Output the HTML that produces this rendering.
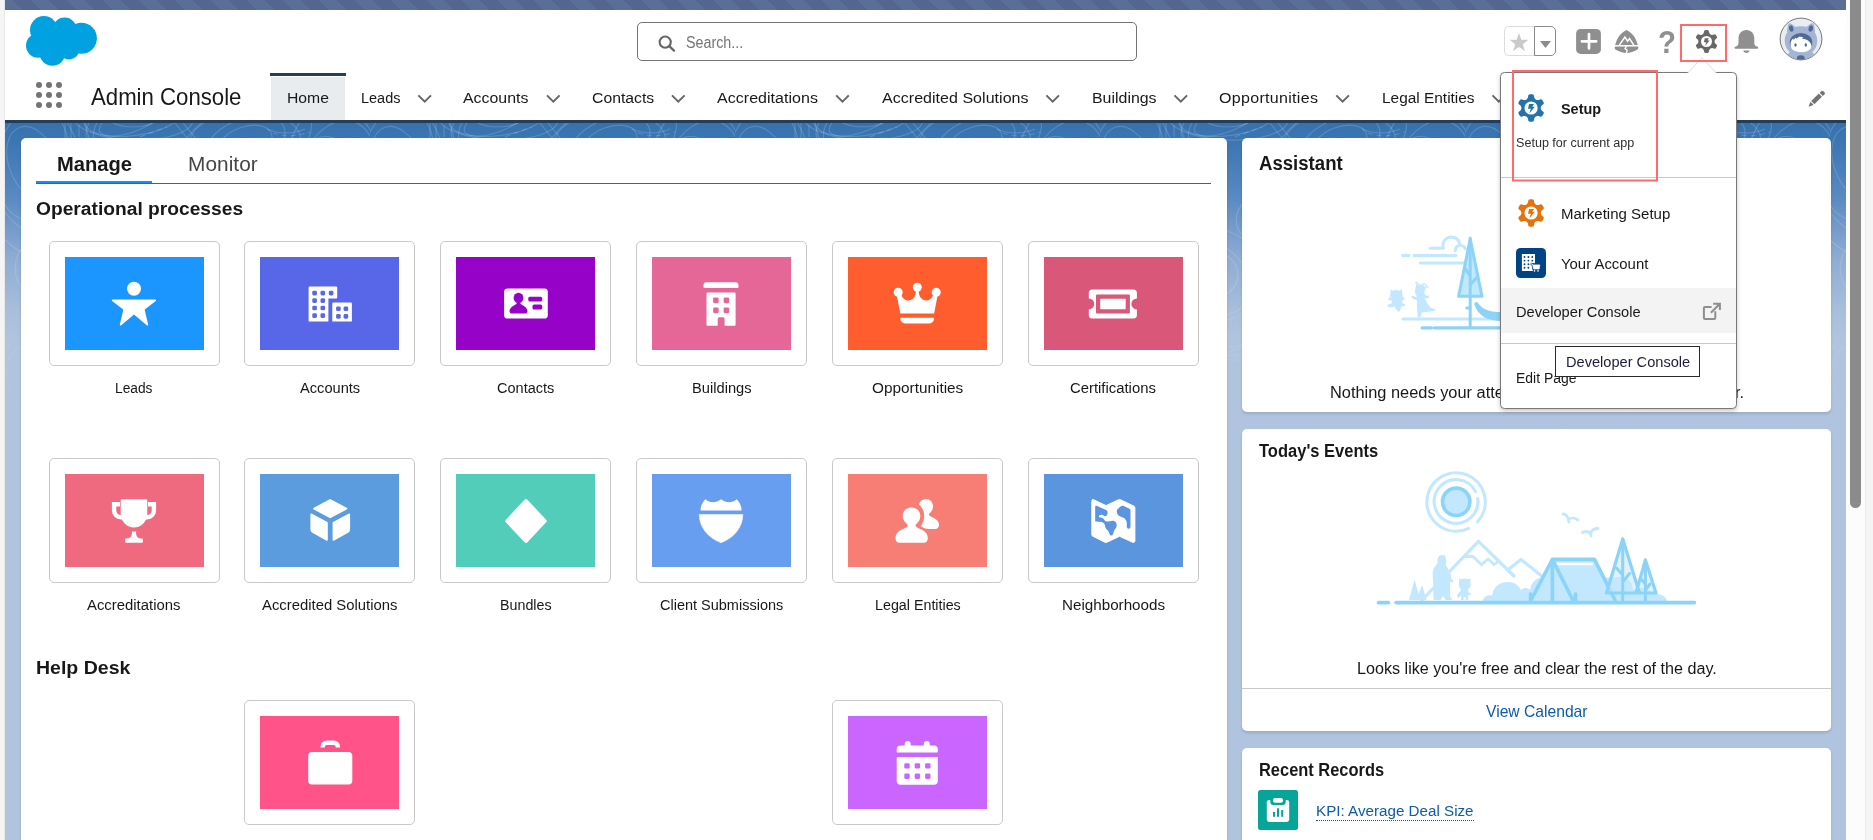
<!DOCTYPE html>
<html lang="en">
<head>
<meta charset="utf-8">
<title>Home | Salesforce</title>
<style>
*{box-sizing:border-box;margin:0;padding:0}
html,body{width:1873px;height:840px;overflow:hidden;background:#fff}
body{font-family:"Liberation Sans",sans-serif;color:#181818;position:relative}
.abs{position:absolute}
.t{position:absolute;white-space:nowrap;line-height:1}
svg{position:absolute;overflow:visible}
#leftstrip{left:0;top:0;width:5px;height:840px;background:#f5f5f5;border-right:1px solid #e8e8e8}
#page{left:0;top:0;width:1846px;height:840px;overflow:hidden;background:#b0c4df}
#topstrip{left:-13px;top:0;width:1859px;height:10px;background:repeating-linear-gradient(45deg,#55668e 0 12.7px,#5b6f96 12.7px 25.4px)}
#header{left:0;top:10px;width:1846px;height:110px;background:#fff}
#navline{left:0;top:120px;width:1846px;height:3px;background:#243e5a}
#bg{left:0;top:123px;width:1846px;height:717px;overflow:hidden;background:linear-gradient(#3671ae 0px,#4079b5 28px,#5a8ac2 75px,#8eacd4 135px,#a8bedc 188px,#b0c4df 215px)}
#scroll{left:1846px;top:0;width:19px;height:840px;background:#fcfcfc}
#thumb{left:1850px;top:-10px;width:11px;height:518px;background:#8b8b8b;border-radius:6px}
#rightcol{left:1865px;top:0;width:8px;height:840px;background:#f5f5f5;border-left:1px solid #ebebeb}
.card{position:absolute;background:#fff;border-radius:5px;box-shadow:0 2px 3px rgba(0,0,0,.12)}
.tile{position:absolute;width:171px;height:125px;border:1px solid #c9c9c9;border-radius:5px;background:#fff}
.tile i{position:absolute;left:15px;top:15px;width:139px;height:93px;display:block}
.tile svg{left:49.5px;top:26.5px;width:40px;height:40px}

</style>
</head>
<body>
<div id="page" class="abs">
<div id="topstrip" class="abs"></div>
<div id="header" class="abs"></div>
<div id="navline" class="abs"></div>
<div id="bg" class="abs"><svg style="left:5px;top:0" width="1846" height="717"><defs><pattern id="tp" width="365" height="220" patternUnits="userSpaceOnUse"><g fill="none" stroke="#fff" stroke-opacity=".17" stroke-width="1.1"><ellipse cx="28" cy="40" rx="60.0" ry="95.0" transform="rotate(-9 28 40)"/><ellipse cx="28" cy="40" rx="48.0" ry="76.0" transform="rotate(-17 28 40)"/><ellipse cx="28" cy="40" rx="36.0" ry="57.0" transform="rotate(8 28 40)"/><ellipse cx="28" cy="40" rx="24.0" ry="38.0" transform="rotate(-21 28 40)"/><ellipse cx="128" cy="-5" rx="60.0" ry="22.0" transform="rotate(2 128 -5)"/><ellipse cx="128" cy="-5" rx="48.0" ry="17.6" transform="rotate(-7 128 -5)"/><ellipse cx="128" cy="-5" rx="36.0" ry="13.2" transform="rotate(-22 128 -5)"/><ellipse cx="128" cy="-5" rx="24.0" ry="8.8" transform="rotate(0 128 -5)"/><ellipse cx="240" cy="20" rx="70.0" ry="40.0" transform="rotate(-23 240 20)"/><ellipse cx="240" cy="20" rx="56.0" ry="32.0" transform="rotate(-3 240 20)"/><ellipse cx="240" cy="20" rx="42.0" ry="24.0" transform="rotate(-22 240 20)"/><ellipse cx="240" cy="20" rx="28.0" ry="16.0" transform="rotate(-20 240 20)"/><ellipse cx="330" cy="60" rx="50.0" ry="80.0" transform="rotate(-4 330 60)"/><ellipse cx="330" cy="60" rx="40.0" ry="64.0" transform="rotate(16 330 60)"/><ellipse cx="330" cy="60" rx="30.0" ry="48.0" transform="rotate(-19 330 60)"/><ellipse cx="330" cy="60" rx="20.0" ry="32.0" transform="rotate(-14 330 60)"/><ellipse cx="90" cy="150" rx="80.0" ry="50.0" transform="rotate(6 90 150)"/><ellipse cx="90" cy="150" rx="64.0" ry="40.0" transform="rotate(22 90 150)"/><ellipse cx="90" cy="150" rx="48.0" ry="30.0" transform="rotate(4 90 150)"/><ellipse cx="90" cy="150" rx="32.0" ry="20.0" transform="rotate(-5 90 150)"/><ellipse cx="250" cy="170" rx="90.0" ry="45.0" transform="rotate(24 250 170)"/><ellipse cx="250" cy="170" rx="72.0" ry="36.0" transform="rotate(-23 250 170)"/><ellipse cx="250" cy="170" rx="54.0" ry="27.0" transform="rotate(18 250 170)"/><ellipse cx="250" cy="170" rx="36.0" ry="18.0" transform="rotate(-11 250 170)"/><ellipse cx="180" cy="90" rx="45.0" ry="30.0" transform="rotate(-18 180 90)"/><ellipse cx="180" cy="90" rx="36.0" ry="24.0" transform="rotate(-19 180 90)"/><ellipse cx="180" cy="90" rx="27.0" ry="18.0" transform="rotate(-10 180 90)"/><ellipse cx="180" cy="90" rx="18.0" ry="12.0" transform="rotate(16 180 90)"/><path d="M60 0 V16 M66 0 V18 M74 2 V14 M84 0 Q78 10 84 20 M92 0 Q86 10 90 22"/><path d="M170 0 L186 20 M178 0 L196 22 M262 6 Q280 14 300 6" /><path d="M268 10 Q285 16 305 9" stroke-dasharray="5 4"/><path d="M135 14 Q150 8 162 4" stroke-dasharray="5 4"/></g></pattern><linearGradient id="tf" x1="0" y1="0" x2="0" y2="1"><stop offset="0" stop-color="#fff"/><stop offset=".22" stop-color="#fff" stop-opacity=".8"/><stop offset=".45" stop-color="#fff" stop-opacity="0"/></linearGradient><mask id="tm"><rect width="1846" height="717" fill="url(#tf)"/></mask></defs><rect width="1846" height="717" fill="url(#tp)" mask="url(#tm)"/></svg></div>
<svg style="left:0.800px;top:0.100px" width="120" height="70" viewBox="0 0 120 70"><g fill="#00a1e0">
<circle cx="42.9" cy="30" r="13.9"/><circle cx="63.6" cy="29.3" r="11.9"/><circle cx="80.4" cy="38.2" r="15.5"/>
<circle cx="37.1" cy="45.6" r="12.1"/><circle cx="51.4" cy="52.8" r="12.9"/><circle cx="67.9" cy="48.6" r="10.7"/>
<rect x="40" y="30" width="40" height="22"/></g></svg>
<div class="abs" style="left:637px;top:22px;width:500px;height:38.5px;border:1px solid #747474;border-radius:5px;background:#fff"></div>
<svg style="left:655px;top:32px" width="24" height="24" viewBox="655 32 24 24"><circle cx="665.2" cy="42.1" r="5.6" fill="none" stroke="#666" stroke-width="2.1"/><path d="M669.3 46.2 L674 50.6" stroke="#666" stroke-width="2.3" stroke-linecap="round"/></svg>
<div class="t " style="left:686.00px;top:35.00px;font-size:15.6px;color:#747474;transform:scaleX(0.9162);transform-origin:0 0;">Search...</div>
<div class="abs" style="left:1504px;top:26px;width:31px;height:30px;border:1px solid #dcdcdc;border-right:0;border-radius:5px 0 0 5px;background:#fff"></div>
<div class="abs" style="left:1534px;top:26px;width:22px;height:30px;border:1.4px solid #8a8a8a;border-radius:0 5px 5px 0;background:#fff"></div>
<svg style="left:1490px;top:10px" width="356" height="70" viewBox="1490 10 356 70"><path d="M1519.00 33.00 L1521.35 39.66 L1528.42 39.84 L1522.80 44.14 L1524.82 50.91 L1519.00 46.90 L1513.18 50.91 L1515.20 44.14 L1509.58 39.84 L1516.65 39.66Z" fill="#c9c9c9"/><path d="M1540 41.1 L1551 41.1 L1545.5 47.9Z" fill="#8c8c8c"/><rect x="1576.1" y="29" width="24.8" height="24.9" rx="4.5" fill="#8f8f8f"/><path d="M1581.900 41.300H1596.200M1589 34V48.400" stroke="#fff" stroke-width="2.700" stroke-linecap="round"/><path d="M1626.5 29.9 C1632.5 32.5 1637 39 1638.3 47.6 C1638.4 48.6 1638 49.4 1637.2 49.8 C1633.8 51.8 1630 53 1626.5 53.1 C1623 53 1619.2 51.8 1615.8 49.8 C1615 49.4 1614.6 48.6 1614.7 47.6 C1616 39 1620.5 32.5 1626.5 29.9Z" fill="#8f8f8f"/>
<path d="M1614 45.8 H1639" stroke="#fff" stroke-width="1.5"/>
<path d="M1619.3 45.2 L1624.9 37 L1627.6 41.2 L1629.5 38.6 L1633.8 45.2" fill="none" stroke="#fff" stroke-width="1.5" stroke-linejoin="miter"/>
<path d="M1626.6 46 L1625 48.6 L1627.2 50.3 L1626.3 53.4" fill="none" stroke="#fff" stroke-width="1.3"/><path d="M1704.00 32.30 L1704.00 31.70 Q1704.00 30.10 1705.60 30.10 L1707.40 30.10 Q1709.00 30.10 1709.00 31.70 L1709.00 32.30 Q1709.90 35.61 1713.22 34.73 L1713.22 34.73 L1713.74 34.43 Q1715.12 33.63 1715.92 35.02 L1716.82 36.58 Q1717.62 37.97 1716.24 38.77 L1715.72 39.07 Q1713.30 41.50 1715.72 43.93 L1715.72 43.93 L1716.24 44.23 Q1717.62 45.03 1716.82 46.42 L1715.92 47.98 Q1715.12 49.37 1713.74 48.57 L1713.22 48.27 Q1709.90 47.39 1709.00 50.70 L1709.00 50.70 L1709.00 51.30 Q1709.00 52.90 1707.40 52.90 L1705.60 52.90 Q1704.00 52.90 1704.00 51.30 L1704.00 50.70 Q1703.10 47.39 1699.78 48.27 L1699.78 48.27 L1699.26 48.57 Q1697.88 49.37 1697.08 47.98 L1696.18 46.42 Q1695.38 45.03 1696.76 44.23 L1697.28 43.93 Q1699.70 41.50 1697.28 39.07 L1697.28 39.07 L1696.76 38.77 Q1695.38 37.97 1696.18 36.58 L1697.08 35.02 Q1697.88 33.63 1699.26 34.43 L1699.78 34.73 Q1703.10 35.61 1704.00 32.30 Z" fill="#686868"/><circle cx="1706.5" cy="41.5" r="5.50" fill="#fff"/><path d="M1704.80 38.20 L1708.90 38.20 L1707.50 40.40 L1709.60 40.40 L1705.00 46.00 L1706.30 42.20 L1703.90 42.20Z" fill="#686868"/><path d="M1746.4 30 C1751.3 30 1754.3 33.6 1754.3 38.5 L1754.3 43 C1754.3 45 1755.6 46.2 1757.3 46.6 C1758 46.8 1758.2 47.2 1758.2 47.7 C1758.2 48.4 1757.7 48.8 1757 48.8 L1735.8 48.8 C1735.1 48.8 1734.6 48.4 1734.6 47.7 C1734.6 47.2 1734.8 46.8 1735.5 46.6 C1737.2 46.2 1738.5 45 1738.5 43 L1738.5 38.5 C1738.5 33.6 1741.5 30 1746.4 30Z" fill="#8f8f8f"/>
<path d="M1743.3 50.6 H1749.5 C1749.3 52.2 1748 53.1 1746.4 53.1 C1744.8 53.1 1743.5 52.2 1743.3 50.6Z" fill="#8f8f8f"/><clipPath id="avc"><circle cx="1801" cy="39" r="20.700"/></clipPath>
<circle cx="1801" cy="39" r="20.900" fill="#e8ecf3" stroke="#777" stroke-width="1"/>
<g clip-path="url(#avc)">
<path d="M1787.600 31.500 L1788.400 25.300 C1788.600 23.800 1790 23.500 1791 24.300 L1796.300 28.300Z M1814.400 31.500 L1813.600 25.300 C1813.400 23.800 1812 23.500 1811 24.300 L1805.700 28.300Z" fill="#a3b5d3" stroke="#a3b5d3" stroke-width="1.200" stroke-linejoin="round"/>
<path d="M1801 26.200 C1811.500 26.200 1817.300 32.500 1817.300 40.500 C1817.300 45.500 1815.300 49.500 1812.300 52 C1814.800 54.500 1816.500 58 1817.500 62 L1784.500 62 C1785.500 58 1787.200 54.500 1789.700 52 C1786.700 49.500 1784.700 45.500 1784.700 40.500 C1784.700 32.500 1790.500 26.200 1801 26.200Z" fill="#a3b5d3"/>
<ellipse cx="1791.200" cy="28.500" rx="2.200" ry="3.200" transform="rotate(-14 1791.200 28.500)" fill="#506a98"/>
<ellipse cx="1810.800" cy="28.500" rx="2.200" ry="3.200" transform="rotate(14 1810.800 28.500)" fill="#506a98"/>
<ellipse cx="1801" cy="42.600" rx="11.300" ry="9.600" fill="#506a98"/>
<path d="M1790.600 45.500 C1790.400 41.500 1791.600 39.800 1793.200 38.600 L1793.600 40 L1795.600 37.600 L1796.200 38.800 L1799.500 36.400 L1803.500 37.600 L1801.800 38.800 C1805 38.600 1808 40 1809.800 42.200 C1811 43.600 1811.500 45 1811.400 46.500 C1811 50 1806.500 52.300 1801 52.300 C1795.500 52.300 1791 50 1790.600 45.500Z" fill="#fff"/>
<ellipse cx="1795.500" cy="45" rx="1.200" ry="1.800" fill="#506a98"/><ellipse cx="1805.800" cy="45" rx="1.200" ry="1.800" fill="#506a98"/>
<ellipse cx="1800.800" cy="58.200" rx="3.900" ry="2.900" fill="#506a98"/>
</g></svg>
<div class="t" style="left:1658.200px;top:25.500px;font-size:32px;font-weight:700;color:#8f8f8f;transform:scaleX(.92);transform-origin:0 0">?</div>
<svg style="left:30px;top:78px" width="40" height="36" viewBox="30 78 40 36"><circle cx="39" cy="85" r="3" fill="#747474"/><circle cx="49" cy="85" r="3" fill="#747474"/><circle cx="59" cy="85" r="3" fill="#747474"/><circle cx="39" cy="95" r="3" fill="#747474"/><circle cx="49" cy="95" r="3" fill="#747474"/><circle cx="59" cy="95" r="3" fill="#747474"/><circle cx="39" cy="105" r="3" fill="#747474"/><circle cx="49" cy="105" r="3" fill="#747474"/><circle cx="59" cy="105" r="3" fill="#747474"/></svg>
<div class="t " style="left:90.50px;top:86.00px;font-size:23.2px;color:#181818;transform:scaleX(0.9567);transform-origin:0 0;">Admin Console</div>
<div class="abs" style="left:270px;top:73px;width:76px;height:3px;background:#243e5a"></div>
<div class="abs" style="left:271px;top:76.500px;width:74px;height:43.200px;background:#e9ecef"></div>
<div class="t " style="left:287.00px;top:90.00px;font-size:15.4px;color:#181818;transform:scaleX(1.0222);transform-origin:0 0;">Home</div>
<div class="t " style="left:360.60px;top:90.00px;font-size:15.4px;color:#181818;transform:scaleX(0.9413);transform-origin:0 0;">Leads</div>
<div class="t " style="left:463.30px;top:90.00px;font-size:15.4px;color:#181818;transform:scaleX(1.0325);transform-origin:0 0;">Accounts</div>
<div class="t " style="left:591.50px;top:90.00px;font-size:15.4px;color:#181818;transform:scaleX(1.0236);transform-origin:0 0;">Contacts</div>
<div class="t " style="left:716.90px;top:90.00px;font-size:15.4px;color:#181818;transform:scaleX(1.0400);transform-origin:0 0;letter-spacing:0.030px;">Accreditations</div>
<div class="t " style="left:881.50px;top:90.00px;font-size:15.4px;color:#181818;transform:scaleX(1.0400);transform-origin:0 0;letter-spacing:0.030px;">Accredited Solutions</div>
<div class="t " style="left:1091.60px;top:90.00px;font-size:15.4px;color:#181818;transform:scaleX(1.0337);transform-origin:0 0;">Buildings</div>
<div class="t " style="left:1219.00px;top:90.00px;font-size:15.4px;color:#181818;transform:scaleX(1.0400);transform-origin:0 0;letter-spacing:0.299px;">Opportunities</div>
<div class="t " style="left:1381.60px;top:90.00px;font-size:15.4px;color:#181818;transform:scaleX(1.0015);transform-origin:0 0;">Legal Entities</div>
<svg style="left:0;top:70px" width="1846" height="50" viewBox="0 70 1846 50"><path d="M418.4 95.400 L424.7 101.700 L431.0 95.400" fill="none" stroke="#666" stroke-width="2" stroke-linecap="butt" stroke-linejoin="miter"/><path d="M547.0 95.400 L553.3 101.700 L559.6 95.400" fill="none" stroke="#666" stroke-width="2" stroke-linecap="butt" stroke-linejoin="miter"/><path d="M672.0 95.400 L678.3 101.700 L684.6 95.400" fill="none" stroke="#666" stroke-width="2" stroke-linecap="butt" stroke-linejoin="miter"/><path d="M836.2 95.400 L842.5 101.700 L848.8 95.400" fill="none" stroke="#666" stroke-width="2" stroke-linecap="butt" stroke-linejoin="miter"/><path d="M1046.4 95.400 L1052.7 101.700 L1059.0 95.400" fill="none" stroke="#666" stroke-width="2" stroke-linecap="butt" stroke-linejoin="miter"/><path d="M1174.5 95.400 L1180.8 101.700 L1187.1 95.400" fill="none" stroke="#666" stroke-width="2" stroke-linecap="butt" stroke-linejoin="miter"/><path d="M1336.3 95.400 L1342.6 101.700 L1348.9 95.400" fill="none" stroke="#666" stroke-width="2" stroke-linecap="butt" stroke-linejoin="miter"/><path d="M1492.5 95.400 L1498.8 101.700 L1505.1 95.400" fill="none" stroke="#666" stroke-width="2" stroke-linecap="butt" stroke-linejoin="miter"/><g transform="translate(1808.5 106.700) rotate(-44)" fill="#747474"><path d="M0 0 L4.900 -2.250 V2.250Z"/><rect x="6" y="-2.250" width="10.500" height="4.500"/><path d="M17.700 -2.250 H20 a1.500 1.500 0 0 1 1.500 1.500 V0.750 a1.500 1.500 0 0 1 -1.500 1.500 H17.700Z"/></g></svg>
<div class="card" style="left:20.5px;top:138px;width:1206.5px;height:720px"></div>
<div class="t " style="left:56.80px;top:154.00px;font-size:20px;color:#181818;transform:scaleX(1.0073);transform-origin:0 0;font-weight:700;">Manage</div>
<div class="t " style="left:187.70px;top:154.00px;font-size:20px;color:#444;transform:scaleX(1.0400);transform-origin:0 0;letter-spacing:0.053px;">Monitor</div>
<div class="abs" style="left:36px;top:182.6px;width:1175px;height:1px;background:#5c5c5c"></div>
<div class="abs" style="left:36px;top:180.7px;width:116px;height:2.6px;background:#1b8cf5"></div>
<div class="t " style="left:35.70px;top:200.00px;font-size:18.8px;color:#181818;transform:scaleX(1.0227);transform-origin:0 0;font-weight:700;">Operational processes</div>
<div class="t " style="left:36.30px;top:659.00px;font-size:18.8px;color:#181818;transform:scaleX(1.0392);transform-origin:0 0;font-weight:700;">Help Desk</div>
<div class="tile" style="left:48.50px;top:241px"><i style="background:#1b96ff"></i></div>
<svg style="left:109.90px;top:279.50px" width="48" height="48" viewBox="-24 -24 48 48"><g fill="#fff"><circle cx="0" cy="-15.3" r="7"/><path d="M-21.3 -3.6 H21.2 L9.6 5.2 L13.3 20.6 L0 9.200 L-13.300 20.600 L-9.600 5.200Z" stroke="#fff" stroke-width="1.8" stroke-linejoin="round"/></g></svg>
<div class="tile" style="left:244.33px;top:241px"><i style="background:#5867e8"></i></div>
<svg style="left:305.73px;top:279.50px" width="48" height="48" viewBox="-24 -24 48 48"><g fill="#fff"><path d="M-20.400 -17.500 H6.200 a1 1 0 0 1 1 1 V-6.600 a1 1 0 0 1 -1 1 H-1.600 V17.400 H-21.400 V-16.500 a1 1 0 0 1 1 -1Z"/><path d="M3.300 -1.600 H20.900 a1 1 0 0 1 1 1 V17.400 H2.300 V-0.600 a1 1 0 0 1 1 -1Z"/><rect x="-17.7" y="-13.2" width="4.6" height="4.6" rx="1.4" fill="#5867e8"/><rect x="-9.5" y="-13.2" width="4.6" height="4.6" rx="1.4" fill="#5867e8"/><rect x="-17.7" y="-5.699999999999999" width="4.6" height="4.6" rx="1.4" fill="#5867e8"/><rect x="-9.5" y="-5.699999999999999" width="4.6" height="4.6" rx="1.4" fill="#5867e8"/><rect x="-17.7" y="1.7000000000000002" width="4.6" height="4.6" rx="1.4" fill="#5867e8"/><rect x="-9.5" y="1.7000000000000002" width="4.6" height="4.6" rx="1.4" fill="#5867e8"/><rect x="-17.7" y="9.3" width="4.6" height="4.6" rx="1.4" fill="#5867e8"/><rect x="-9.5" y="9.3" width="4.6" height="4.6" rx="1.4" fill="#5867e8"/><rect x="-1.1999999999999997" y="-13.2" width="4.6" height="4.6" rx="1.4" fill="#5867e8"/><rect x="6.1000000000000005" y="2.5" width="4.6" height="4.6" rx="1.4" fill="#5867e8"/><rect x="13.600000000000001" y="2.5" width="4.6" height="4.6" rx="1.4" fill="#5867e8"/><rect x="6.1000000000000005" y="10.100000000000001" width="4.6" height="4.6" rx="1.4" fill="#5867e8"/><rect x="13.600000000000001" y="10.100000000000001" width="4.6" height="4.6" rx="1.4" fill="#5867e8"/></g></svg>
<div class="tile" style="left:440.16px;top:241px"><i style="background:#9602c7"></i></div>
<svg style="left:501.56px;top:279.50px" width="48" height="48" viewBox="-24 -24 48 48"><g fill="#fff"><rect x="-21.9" y="-15.6" width="43.7" height="30.2" rx="3.4" fill="#fff"/><ellipse cx="-7.5" cy="-6.1" rx="4.9" ry="5.2" fill="#9602c7"/><path d="M-9.400 -2.500 H-5.600 V-0.500 C-5.600 0.800 1.500 2.600 1.500 7 C1.500 8.600 0.400 9.600 -1 9.600 H-14 C-15.400 9.600 -16.500 8.600 -16.500 7 C-16.500 2.600 -9.400 0.800 -9.400 -0.500Z" fill="#9602c7"/><rect x="2.3" y="-7.3" width="13.9" height="4.9" rx="1.6" fill="#9602c7"/><rect x="6.5" y="0.6" width="9.7" height="5" rx="1.6" fill="#9602c7"/></g></svg>
<div class="tile" style="left:635.99px;top:241px"><i style="background:#e56798"></i></div>
<svg style="left:697.39px;top:279.50px" width="48" height="48" viewBox="-24 -24 48 48"><g fill="#fff"><path d="M-14.500 -21.700 H14.500 a3 3 0 0 1 3 3 V-17 a1.100 1.100 0 0 1 -1.100 1.100 H-16.400 a1.100 1.100 0 0 1 -1.100 -1.100 V-18.700 a3 3 0 0 1 3 -3Z"/><path d="M-13.500 -11.600 H13.600 a1 1 0 0 1 1 1 V20.700 a1 1 0 0 1 -1 1 H3.600 V14.700 a1.500 1.500 0 0 0 -1.500 -1.500 H-1.800 a1.500 1.500 0 0 0 -1.500 1.500 V21.700 H-13.500 a1 1 0 0 1 -1 -1 V-10.600 a1 1 0 0 1 1 -1Z"/><rect x="-7.9" y="-6.4" width="5.6" height="5.6" rx="1.4" fill="#e56798"/><rect x="-7.9" y="3.6" width="5.6" height="5.6" rx="1.4" fill="#e56798"/><rect x="2.6" y="-6.4" width="5.6" height="5.6" rx="1.4" fill="#e56798"/><rect x="2.6" y="3.6" width="5.6" height="5.6" rx="1.4" fill="#e56798"/></g></svg>
<div class="tile" style="left:831.82px;top:241px"><i style="background:#ff5d2d"></i></div>
<svg style="left:893.22px;top:279.50px" width="48" height="48" viewBox="-24 -24 48 48"><g fill="#fff"><circle cx="-18.800" cy="-11.800" r="4.500"/><circle cx="0.300" cy="-16.700" r="4.500"/><circle cx="19.200" cy="-11.800" r="4.500"/><path d="M-20.300 -9 L-16.700 9.400 H17.100 L20.700 -9 L16.300 -9.600 C15 -5.500 12 -3.500 9.400 -3.500 C5 -3.500 1.900 -7 1.700 -13 H-1.100 C-1.300 -7 -4.400 -3.500 -8.800 -3.500 C-11.400 -3.500 -14.400 -5.500 -15.700 -9.600Z"/><path d="M-15.700 13.700 H16.100 a1 1 0 0 1 1 1 a4.800 4.800 0 0 1 -4.800 4.800 H-11.900 a4.800 4.800 0 0 1 -4.800 -4.800 a1 1 0 0 1 1 -1Z"/></g></svg>
<div class="tile" style="left:1027.65px;top:241px"><i style="background:#d95879"></i></div>
<svg style="left:1089.05px;top:279.50px" width="48" height="48" viewBox="-24 -24 48 48"><g fill="#fff"><path d="M-20.700 -14.600 H20.400 a3.500 3.500 0 0 1 3.500 3.500 V-5.600 a5.200 5.200 0 0 0 0 11 V11.100 a3.500 3.500 0 0 1 -3.500 3.500 H-20.700 a3.500 3.500 0 0 1 -3.500 -3.500 V5.400 a5.200 5.200 0 0 0 0 -11 V-11.100 a3.500 3.500 0 0 1 3.500 -3.500Z"/><rect x="-17" y="-9.6" width="33.9" height="19" rx="1.2" fill="#d95879"/><rect x="-12.8" y="-5.2" width="25.5" height="10.4" rx="0.6" fill="#fff"/></g></svg>
<div class="tile" style="left:48.50px;top:458px"><i style="background:#ef697f"></i></div>
<svg style="left:109.90px;top:496.50px" width="48" height="48" viewBox="-24 -24 48 48"><g fill="#fff"><path d="M-12.300 -21.700 H12.300 a1 1 0 0 1 1 1 V-6.900 a13.300 13.300 0 0 1 -26.600 0 V-20.700 a1 1 0 0 1 1 -1Z"/><path d="M-14 -16.800 H-19.900 V-10.400 a6.600 6.600 0 0 0 6.600 6.600 H-12" fill="none" stroke="#fff" stroke-width="4.400"/><path d="M14 -16.800 H19.900 V-10.400 a6.600 6.600 0 0 1 -6.600 6.600 H12" fill="none" stroke="#fff" stroke-width="4.400"/><path d="M-2.100 10.600 H2.100 V12.500 C2.100 15.500 4.500 17.500 7.900 17.500 a1 1 0 0 1 1 1 V20.700 a1 1 0 0 1 -1 1 H-7.900 a1 1 0 0 1 -1 -1 V18.500 a1 1 0 0 1 1 -1 C-4.500 17.500 -2.100 15.500 -2.100 12.500Z"/></g></svg>
<div class="tile" style="left:244.33px;top:458px"><i style="background:#5a9cdd"></i></div>
<svg style="left:305.73px;top:496.50px" width="48" height="48" viewBox="-24 -24 48 48"><g fill="#fff"><path d="M0.200 -20.900 L16.300 -12.400 L0.200 -3.800 L-15.800 -12.400Z" stroke="#fff" stroke-width="2" stroke-linejoin="round"/><path d="M-18.800 -6.800 L-3 1.800 V19 L-17.300 11 a3 3 0 0 1 -1.500 -2.600Z" stroke="#fff" stroke-width="1.600" stroke-linejoin="round"/><path d="M19.300 -6.800 L3.400 1.800 V19 L17.800 11 a3 3 0 0 0 1.500 -2.600Z" stroke="#fff" stroke-width="1.600" stroke-linejoin="round"/></g></svg>
<div class="tile" style="left:440.16px;top:458px"><i style="background:#52cdb9"></i></div>
<svg style="left:501.56px;top:496.50px" width="48" height="48" viewBox="-24 -24 48 48"><g fill="#fff"><path d="M0 -19.800 L18.700 0 L0 19.800 L-18.700 0Z" stroke="#fff" stroke-width="4" stroke-linejoin="round"/></g></svg>
<div class="tile" style="left:635.99px;top:458px"><i style="background:#689ef0"></i></div>
<svg style="left:697.39px;top:496.50px" width="48" height="48" viewBox="-24 -24 48 48"><g fill="#fff"><path d="M-20.500 -11.200 C-20.500 -14.800 -18.300 -19 -15.700 -21.700 C-13.300 -19.600 -10.800 -18.700 -8.100 -18.700 C-5.400 -18.700 -2.400 -19.600 0 -21.700 C2.400 -19.600 5.400 -18.700 8.200 -18.700 C10.900 -18.700 13.400 -19.600 15.800 -21.700 C18.400 -19 20.600 -14.800 20.600 -11.200 a0.600 0.600 0 0 1 -0.600 0.600 H-19.900 a0.600 0.600 0 0 1 -0.600 -0.600Z"/><path d="M-21.700 -6.400 H21.800 C21.800 6 13 17 0 21.700 C-13 17 -21.700 6 -21.700 -6.400Z" stroke="#fff" stroke-width="0.6" stroke-linejoin="round"/></g></svg>
<div class="tile" style="left:831.82px;top:458px"><i style="background:#f77e75"></i></div>
<svg style="left:893.22px;top:496.50px" width="48" height="48" viewBox="-24 -24 48 48"><g fill="#fff"><path d="M8.900 -21.900 C13 -21.900 16 -18.800 16 -14.500 C16 -11.600 14.600 -9.300 12.700 -7.900 C11.700 -7.100 11.700 -5.800 12.900 -5.100 C16.500 -3.300 22 -1.500 22 3.800 C22 6.400 20.500 8 18.300 8 H11.500 C9 8 6 6.800 3.800 5.200 C6 2 7.200 -1.400 7.200 -5 C7.200 -10 5.200 -13.700 1.900 -16.600 C3 -19.800 5.600 -21.900 8.900 -21.900Z"/><path d="M-5.500 -13.600 C-0.400 -13.600 3.300 -9.900 3.300 -4.800 C3.300 -1.300 1.400 1.200 -0.600 2.900 C-1.700 3.900 -1.700 5.400 -0.300 6.200 C3.600 8.400 10.800 10 10.800 17 C10.800 20 9.300 21.700 6.800 21.700 H-17.500 C-20 21.700 -21.500 20 -21.500 17 C-21.500 10 -14.300 8.400 -10.400 6.200 C-9 5.400 -9 3.900 -10.100 2.900 C-12.100 1.200 -14.300 -1.300 -14.300 -4.800 C-14.300 -9.900 -10.600 -13.600 -5.500 -13.600Z"/></g></svg>
<div class="tile" style="left:1027.65px;top:458px"><i style="background:#5a95dd"></i></div>
<svg style="left:1089.05px;top:496.50px" width="48" height="48" viewBox="-24 -24 48 48"><g fill="#fff"><path d="M-21.200 -20.500 a1 1 0 0 1 1.500 -0.900 L-7 -15.400 L5.600 -21.300 a2 2 0 0 1 1.800 0 L20.800 -14.900 a1.800 1.800 0 0 1 1.100 1.700 V20 a1.500 1.500 0 0 1 -2.200 1.300 L6.500 15.300 L-6.200 21.300 a2 2 0 0 1 -1.800 0 L-20.400 15.100 a1.500 1.500 0 0 1 -0.800 -1.300Z" stroke="#fff" stroke-width="1" stroke-linejoin="round"/><path d="M-17.800 -14.300 a1 1 0 0 1 1.400 -0.900 L-7.400 -11.200 C-5.400 -10.200 -5 -8.600 -5.600 -7 C-6.200 -5.300 -7.400 -4.300 -8.600 -4.900 C-10 -6.300 -12.400 -6.800 -13.600 -5.800 C-14.500 -4.800 -13.800 -3.600 -12.400 -3.400 C-10.600 -3.300 -9.600 -2.400 -8.400 -0.800 C-6.800 1.400 -3.500 0.500 -0.800 -0.200 C2 -0.600 3.900 1.600 3.700 4.400 C3.500 7 1.500 8.200 0.800 10.400 C0.200 12.400 0 14.600 -1.800 14.600 C-3.600 14.600 -3.600 12.600 -4.200 10.800 C-5 8.800 -7.400 8.400 -7.800 5.800 C-8 3.600 -8.600 2 -10.600 1.200 C-12.800 0.400 -15.200 0.800 -16.600 0.600 a1.200 1.200 0 0 1 -1.200 -1.200Z" fill="#5a95dd"/><path d="M7.600 -14.600 C8.600 -15.500 9.800 -15.500 10.800 -15 L16.500 -12.200 a1.800 1.800 0 0 1 1 1.600 V5.600 C17.500 7 16.700 7.800 15.700 7.800 C14.600 7.800 13.800 7 13.800 5.800 C13.800 3.600 14 0.800 13 -0.800 C12 -2.600 10.200 -3.400 8.600 -3.900 C5.800 -4.800 3.700 -6.800 3.700 -9.400 C3.700 -11.600 5.800 -13.200 7.600 -14.600Z" fill="#5a95dd"/></g></svg>
<div class="tile" style="left:244.33px;top:700px"><i style="background:#ff538a"></i></div>
<svg style="left:305.73px;top:738.50px" width="48" height="48" viewBox="-24 -24 48 48"><g fill="#fff"><rect x="-21.8" y="-11" width="44.1" height="32.5" rx="3.8" fill="#fff"/><path d="M-7.400 -15.500 V-16.300 a4 4 0 0 1 4 -4 H3.900 a4 4 0 0 1 4 4 V-15.500" fill="none" stroke="#fff" stroke-width="4.400"/></g></svg>
<div class="tile" style="left:831.82px;top:700px"><i style="background:#cb65ff"></i></div>
<svg style="left:893.22px;top:738.50px" width="48" height="48" viewBox="-24 -24 48 48"><g fill="#fff"><path d="M-16.300 -17.500 H16.800 a4 4 0 0 1 4 4 V-11.200 a0.800 0.800 0 0 1 -0.800 0.800 H-19.500 a0.800 0.800 0 0 1 -0.800 -0.800 V-13.500 a4 4 0 0 1 4 -4Z"/><rect x="-12.3" y="-21.9" width="6" height="8" rx="3" fill="#fff"/><rect x="6.8" y="-21.9" width="6" height="8" rx="3" fill="#fff"/><path d="M-19.500 -6 H20 a0.800 0.800 0 0 1 0.800 0.800 V17.700 a4 4 0 0 1 -4 4 H-16.300 a4 4 0 0 1 -4 -4 V-5.200 a0.800 0.800 0 0 1 0.800 -0.800Z"/><rect x="-12.7" y="0.2" width="5.4" height="5.4" rx="1.4" fill="#cb65ff"/><rect x="-12.7" y="10.5" width="5.4" height="5.4" rx="1.4" fill="#cb65ff"/><rect x="-2.3" y="0.2" width="5.4" height="5.4" rx="1.4" fill="#cb65ff"/><rect x="-2.3" y="10.5" width="5.4" height="5.4" rx="1.4" fill="#cb65ff"/><rect x="8.1" y="0.2" width="5.4" height="5.4" rx="1.4" fill="#cb65ff"/><rect x="8.1" y="10.5" width="5.4" height="5.4" rx="1.4" fill="#cb65ff"/></g></svg>
<div class="t " style="left:115.30px;top:380.00px;font-size:15.1px;color:#181818;transform:scaleX(0.9114);transform-origin:0 0;">Leads</div>
<div class="t " style="left:299.50px;top:380.00px;font-size:15.1px;color:#181818;transform:scaleX(0.9693);transform-origin:0 0;">Accounts</div>
<div class="t " style="left:496.80px;top:380.00px;font-size:15.1px;color:#181818;transform:scaleX(0.9617);transform-origin:0 0;">Contacts</div>
<div class="t " style="left:691.90px;top:380.00px;font-size:15.1px;color:#181818;transform:scaleX(0.9727);transform-origin:0 0;">Buildings</div>
<div class="t " style="left:871.60px;top:380.00px;font-size:15.1px;color:#181818;transform:scaleX(1.0165);transform-origin:0 0;">Opportunities</div>
<div class="t " style="left:1070.20px;top:380.00px;font-size:15.1px;color:#181818;transform:scaleX(0.9842);transform-origin:0 0;">Certifications</div>
<div class="t " style="left:87.40px;top:597.00px;font-size:15.1px;color:#181818;transform:scaleX(0.9858);transform-origin:0 0;">Accreditations</div>
<div class="t " style="left:262.00px;top:597.00px;font-size:15.1px;color:#181818;transform:scaleX(0.9844);transform-origin:0 0;">Accredited Solutions</div>
<div class="t " style="left:500.00px;top:597.00px;font-size:15.1px;color:#181818;transform:scaleX(0.9456);transform-origin:0 0;">Bundles</div>
<div class="t " style="left:659.90px;top:597.00px;font-size:15.1px;color:#181818;transform:scaleX(0.9603);transform-origin:0 0;">Client Submissions</div>
<div class="t " style="left:874.50px;top:597.00px;font-size:15.1px;color:#181818;transform:scaleX(0.9464);transform-origin:0 0;">Legal Entities</div>
<div class="t " style="left:1061.90px;top:597.00px;font-size:15.1px;color:#181818;transform:scaleX(1.0066);transform-origin:0 0;">Neighborhoods</div>
<div class="card" style="left:1242px;top:138px;width:588.500px;height:274.3px"></div>
<div class="t " style="left:1258.70px;top:153.00px;font-size:20px;color:#181818;transform:scaleX(0.9296);transform-origin:0 0;font-weight:700;">Assistant</div>
<svg style="left:1380px;top:225px" width="320" height="120" viewBox="1380 225 320 120" fill="none" stroke-linecap="round" stroke-linejoin="round"><path d="M1430 248.300 H1443.400 C1441.500 242 1446 236.800 1451.500 237 C1455.500 237.200 1458.500 239.600 1459.600 243.200 M1455.200 250.800 C1455.400 246.300 1459.500 244.300 1462.500 245.800 C1464 246.500 1465 247.600 1465.600 249" stroke="#c2e8ff" stroke-width="3"/><path d="M1402.500 255.600 H1409 M1414 255.600 H1456 M1420.300 263 H1464" stroke="#c2e8ff" stroke-width="3"/><path d="M1403 319 H1500" stroke="#c2e8ff" stroke-width="3.200"/><path d="M1470.200 239 L1482 296.300 H1458.600Z" fill="#c2e8ff" stroke="#8cd3f8" stroke-width="3"/><path d="M1470.200 238 V327 M1470.200 276 L1464.500 267.500 M1470.200 285 L1476.500 277.500" stroke="#8cd3f8" stroke-width="3"/><path d="M1422 327.800 H1431.500 M1434.500 327.800 H1505 M1466.800 308 H1470" stroke="#8cd3f8" stroke-width="3.200"/><path d="M1474.300 304.500 C1473.800 302.500 1476.500 301 1477.800 302.800 C1482.500 309.500 1489 312.200 1503 312.200 V321 C1487 321 1478 315.500 1474.300 304.500Z" fill="#8cd3f8"/><path d="M1390.500 289.500 L1393.200 290.800 C1395 289.800 1397.500 289.800 1399.300 290.800 L1402 289.500 L1402.200 293.500 C1403 295 1403 296.500 1402.500 297.600 L1404.600 297 L1403.800 300 L1402 300.800 L1402.500 303.500 L1405.500 304.300 L1404 306.500 L1401.500 306 L1400.500 309.500 L1399 312 L1396.500 309.800 L1394.500 306.500 L1391 307.500 L1387.500 306.500 L1387.500 304.800 L1391.500 303.500 L1391.800 300.500 L1388.500 300 L1388.800 297.500 L1390.700 297.500 C1390 296 1390 294.500 1390.500 293Z" fill="#c2e8ff"/><path d="M1416.500 283 L1418.300 285.300 C1420.500 284.300 1423 284.800 1424.500 286.300 L1427.300 287.500 L1424.800 288.800 C1425.200 290.500 1424.800 292 1424 293 L1426.500 296 L1429 295.300 L1429.500 297 L1426.500 298.500 L1424.800 297.700 L1426.800 302.500 L1431 308 L1434.800 309 L1434.500 311 L1430 311.500 L1421.500 312.500 L1420.500 317.500 L1417.800 317.500 L1417 308 L1416.800 300 L1413.500 299 L1411.300 296.800 L1412.300 295.600 L1415.500 297 L1417 296.500 C1415 294 1414.300 290.500 1415.500 288Z" fill="#c2e8ff"/><path d="M1419.300 284.600 L1417.200 282.600 L1415.600 282.900 M1422 284.600 C1423.500 283.300 1425.200 283.700 1426.200 285.200 L1428 287.200" stroke="#c2e8ff" stroke-width="1.300"/></svg>
<div class="t " style="left:1330.00px;top:385.00px;font-size:16px;color:#181818;transform:scaleX(1.0233);transform-origin:0 0;">Nothing needs your attention right now. Check back later.</div>
<div class="card" style="left:1242px;top:428.600px;width:588.500px;height:302.400px"></div>
<div class="t " style="left:1258.50px;top:442.00px;font-size:18px;color:#181818;transform:scaleX(0.9170);transform-origin:0 0;font-weight:700;">Today&#39;s Events</div>
<svg style="left:1370px;top:465px" width="340" height="150" viewBox="1370 465 340 150" fill="none" stroke-linecap="round" stroke-linejoin="round"><circle cx="1456.200" cy="501.800" r="13.700" fill="#c2e8ff" stroke="#8cd3f8" stroke-width="3.600"/><path d="M1475.400 491.500 A21.800 21.800 0 1 0 1477.600 498.500 M1478 499.500 A21.800 21.800 0 0 1 1476.500 510" stroke="#c2e8ff" stroke-width="3.100"/><path d="M1468.500 528.400 A29.200 29.200 0 1 1 1477.500 521.800" stroke="#c2e8ff" stroke-width="3.100"/><path d="M1422 600 L1478.500 541.300 L1514 576 M1509.500 568.500 L1521 559.400 L1541 575.500" stroke="#c2e8ff" stroke-width="3.200"/><path d="M1464.800 556.500 H1473 L1481.500 564.800 L1488 559 L1494 564.600 L1497.500 562" stroke="#c2e8ff" stroke-width="2.800"/><path d="M1483 601 C1483 597 1487 594.500 1492 595.500 C1493.500 586 1500 582 1508 582 C1514 582 1519 585.500 1521 590 C1524 587 1528 587.500 1530 590 C1531 582 1537 577.500 1543 577.500 L1560 577.500 L1615 577.500 C1625 575 1632 580 1633 590 C1640 586 1650 588 1652 594 C1660 593 1666 596 1667 601Z" fill="#c2e8ff"/><path d="M1409 600 L1414.500 579.500 L1418.500 594 L1422 585 L1426.500 600Z" fill="#c2e8ff"/><path d="M1439 556 L1441 555 L1443.500 555.500 L1445 555 L1445.500 558.500 C1446.500 560 1446.500 562.500 1445.500 564.500 L1448 569 L1450.500 574 L1451.500 579 L1453.800 580.500 L1452.500 582.500 L1450 582 L1450 596 L1452.500 600 L1445.500 600 L1443 596 L1440.500 600 L1433.500 600 L1433.200 585 L1432.600 573 C1433 569 1435 566 1437.500 563.500 C1437 561 1437.500 558 1439 556Z" fill="#c2e8ff"/><path d="M1459 578.500 L1461.500 579.300 C1463.500 578.300 1466 578.300 1468 579.300 L1470.500 578.500 L1470.300 582.500 C1471 584.500 1470.500 586.500 1469.500 588 L1468 589.500 L1468.500 592.500 L1471 593.500 L1470.300 595.200 L1468.200 594.800 L1468 600 L1465.800 600 L1465.500 597 L1463.700 597 L1463.500 600 L1461 600 L1460.800 595 L1458.500 598 L1456.800 596 L1458.500 593 L1461 590.500 L1461 589.500 C1459.500 588 1458.800 586 1459 584Z" fill="#c2e8ff"/><path d="M1552.400 559.400 H1594.500 L1615 601 H1573.300 Z" fill="#c2e8ff"/><path d="M1552.400 559.400 L1530.600 601 H1573.300Z" fill="#c2e8ff"/><path d="M1556 564 H1592" stroke="#fff" stroke-width="2.400"/><path d="M1530.600 601 L1552.400 559.400 L1573.300 601 M1552.400 559.400 V601 M1552.400 559.400 H1594.500 L1615 600 M1530.600 594 V601 M1575.500 594 V601" stroke="#8cd3f8" stroke-width="3.600"/><path d="M1622.700 539 L1639.500 593 H1606.500Z M1645.400 560 L1656 593 H1636Z" fill="#c2e8ff" fill-opacity=".55" stroke="#8cd3f8" stroke-width="3.200"/><path d="M1622.700 539 V601 M1645.400 560 V601 M1622.700 575 L1616.500 568 M1622.700 582 L1629.500 573.500 M1645.400 584 L1641 579 M1645.400 590 L1650 584" stroke="#8cd3f8" stroke-width="3"/><path d="M1563.300 514 C1566 514 1567.500 516.500 1568.300 519.500 C1570.500 517.500 1574.500 517.500 1577.800 519.800 M1568.300 519.500 L1569 522" stroke="#c2e8ff" stroke-width="2.800"/><path d="M1582.500 532.500 C1585.500 531 1588.500 531.500 1590.500 533.500 C1591.500 530.500 1594.500 528.500 1598 528.500 M1590.500 533.500 L1591 536" stroke="#c2e8ff" stroke-width="2.800"/><path d="M1378.500 602.600 H1388.500 M1396 602.600 H1694.500" stroke="#8cd3f8" stroke-width="3.600"/></svg>
<div class="t " style="left:1356.80px;top:661.00px;font-size:16px;color:#181818;transform:scaleX(1.0086);transform-origin:0 0;">Looks like you&#39;re free and clear the rest of the day.</div>
<div class="abs" style="left:1242px;top:687.800px;width:588.500px;height:1px;background:#c9c9c9"></div>
<div class="t " style="left:1485.90px;top:704.00px;font-size:15.7px;color:#0b5cab;transform:scaleX(0.9979);transform-origin:0 0;">View Calendar</div>
<div class="card" style="left:1242px;top:748px;width:588.500px;height:120px"></div>
<div class="t " style="left:1258.50px;top:761.00px;font-size:18px;color:#181818;transform:scaleX(0.9128);transform-origin:0 0;font-weight:700;">Recent Records</div>
<div class="abs" style="left:1258px;top:790px;width:40px;height:40px;border-radius:2.500px;background:#06a59a"></div>
<svg style="left:1258px;top:790px" width="40" height="40" viewBox="0 0 40 40"><rect x="8.800" y="9.900" width="22.400" height="22.100" rx="2.400" fill="#fff"/><rect x="12.300" y="5" width="15.400" height="10" rx="3" fill="#06a59a"/><rect x="15" y="8" width="10" height="4.800" rx="2" fill="#fff"/><path d="M16 22 V26.700 M20 18.300 V26.700 M24.200 20 V26.700" stroke="#06a59a" stroke-width="2"/></svg>
<div class="t " style="left:1316.10px;top:803.00px;font-size:15.3px;color:#0b5cab;transform:scaleX(0.9926);transform-origin:0 0;">KPI: Average Deal Size</div>
<div class="abs" style="left:1316px;top:820px;width:158px;height:0;border-top:1px dotted #0b5cab"></div>
<div class="abs" style="left:1500px;top:72px;width:237px;height:337px;background:#fff;border:1px solid #787878;border-radius:4.5px;box-shadow:0 2px 4px rgba(0,0,0,.22)"></div>
<svg style="left:1680px;top:50px" width="50" height="30" viewBox="1680 50 50 30"><path d="M1687 74 L1702 57.600 L1717 74Z" fill="#fff"/><path d="M1687.900 72.900 L1702 57.600 L1716.100 72.900" fill="none" stroke="#dedede" stroke-width="1"/></svg>
<div class="abs" style="left:1501px;top:177px;width:235px;height:1px;background:#c9c9c9"></div>
<div class="abs" style="left:1501px;top:288px;width:235px;height:44.700px;background:#f3f3f3"></div>
<div class="abs" style="left:1501px;top:343px;width:235px;height:1px;background:#c9c9c9"></div>
<svg style="left:1500px;top:60px" width="240" height="350" viewBox="1500 60 240 350"><path d="M1528.10 96.96 L1528.10 96.24 Q1528.10 94.32 1530.02 94.32 L1532.18 94.32 Q1534.10 94.32 1534.10 96.24 L1534.10 96.96 Q1535.18 100.93 1539.16 99.88 L1539.16 99.88 L1539.78 99.52 Q1541.45 98.56 1542.41 100.22 L1543.49 102.10 Q1544.45 103.76 1542.78 104.72 L1542.16 105.08 Q1539.26 108.00 1542.16 110.92 L1542.16 110.92 L1542.78 111.28 Q1544.45 112.24 1543.49 113.90 L1542.41 115.78 Q1541.45 117.44 1539.78 116.48 L1539.16 116.12 Q1535.18 115.07 1534.10 119.04 L1534.10 119.04 L1534.10 119.76 Q1534.10 121.68 1532.18 121.68 L1530.02 121.68 Q1528.10 121.68 1528.10 119.76 L1528.10 119.04 Q1527.02 115.07 1523.04 116.12 L1523.04 116.12 L1522.42 116.48 Q1520.75 117.44 1519.79 115.78 L1518.71 113.90 Q1517.75 112.24 1519.42 111.28 L1520.04 110.92 Q1522.94 108.00 1520.04 105.08 L1520.04 105.08 L1519.42 104.72 Q1517.75 103.76 1518.71 102.10 L1519.79 100.22 Q1520.75 98.56 1522.42 99.52 L1523.04 99.88 Q1527.02 100.93 1528.10 96.96 Z" fill="#2574a9"/><circle cx="1531.1" cy="108" r="6.60" fill="#fff"/><path d="M1529.06 104.04 L1533.98 104.04 L1532.30 106.68 L1534.82 106.68 L1529.30 113.40 L1530.86 108.84 L1527.98 108.84Z" fill="#2574a9"/><path d="M1528.10 201.96 L1528.10 201.24 Q1528.10 199.32 1530.02 199.32 L1532.18 199.32 Q1534.10 199.32 1534.10 201.24 L1534.10 201.96 Q1535.18 205.93 1539.16 204.88 L1539.16 204.88 L1539.78 204.52 Q1541.45 203.56 1542.41 205.22 L1543.49 207.10 Q1544.45 208.76 1542.78 209.72 L1542.16 210.08 Q1539.26 213.00 1542.16 215.92 L1542.16 215.92 L1542.78 216.28 Q1544.45 217.24 1543.49 218.90 L1542.41 220.78 Q1541.45 222.44 1539.78 221.48 L1539.16 221.12 Q1535.18 220.07 1534.10 224.04 L1534.10 224.04 L1534.10 224.76 Q1534.10 226.68 1532.18 226.68 L1530.02 226.68 Q1528.10 226.68 1528.10 224.76 L1528.10 224.04 Q1527.02 220.07 1523.04 221.12 L1523.04 221.12 L1522.42 221.48 Q1520.75 222.44 1519.79 220.78 L1518.71 218.90 Q1517.75 217.24 1519.42 216.28 L1520.04 215.92 Q1522.94 213.00 1520.04 210.08 L1520.04 210.08 L1519.42 209.72 Q1517.75 208.76 1518.71 207.10 L1519.79 205.22 Q1520.75 203.56 1522.42 204.52 L1523.04 204.88 Q1527.02 205.93 1528.10 201.96 Z" fill="#e4730b"/><circle cx="1531.1" cy="213" r="6.60" fill="#fff"/><path d="M1529.06 209.04 L1533.98 209.04 L1532.30 211.68 L1534.82 211.68 L1529.30 218.40 L1530.86 213.84 L1527.98 213.84Z" fill="#e4730b"/><rect x="1516" y="248" width="30" height="30" rx="4.500" fill="#014486"/><path d="M1521.900 253.900 H1535 V263.200 H1531.400 L1532.900 271 H1521.900Z" fill="#fff"/><circle cx="1524.5" cy="257" r="0.950" fill="#014486"/><circle cx="1528.4" cy="257" r="0.950" fill="#014486"/><circle cx="1532.25" cy="257" r="0.950" fill="#014486"/><circle cx="1524.5" cy="260.6" r="0.950" fill="#014486"/><circle cx="1528.4" cy="260.6" r="0.950" fill="#014486"/><circle cx="1532.25" cy="260.6" r="0.950" fill="#014486"/><circle cx="1524.5" cy="264.2" r="0.950" fill="#014486"/><circle cx="1528.4" cy="264.2" r="0.950" fill="#014486"/><circle cx="1524.5" cy="267.8" r="0.950" fill="#014486"/><circle cx="1528.4" cy="267.8" r="0.950" fill="#014486"/><path d="M1530.600 263.700 L1532.400 264.100 L1533.700 269 H1539.200 L1539.800 264.900 H1533" fill="#014486" stroke="#014486" stroke-width="2.200" stroke-linejoin="round"/><path d="M1530.600 263.700 L1532.400 264.100 L1533.700 269 H1539.200 L1539.800 264.900 H1533" fill="#fff" stroke="#fff" stroke-width="0.700" stroke-linejoin="round"/><circle cx="1534.500" cy="270.900" r="0.800" fill="#fff"/><circle cx="1538" cy="270.900" r="0.800" fill="#fff"/><path d="M1711.600 307.100 H1704.900 a1 1 0 0 0 -1 1 V317.900 a1 1 0 0 0 1 1 H1714.300 a1 1 0 0 0 1 -1 V311.200" fill="none" stroke="#8e8e8e" stroke-width="2" stroke-linecap="butt"/><path d="M1713.200 303.700 H1719.900 V309.900 M1719.600 304 L1710.900 312.700" fill="none" stroke="#8e8e8e" stroke-width="2" stroke-linecap="butt" stroke-linejoin="miter"/><rect x="1513" y="71" width="144" height="109.500" fill="none" stroke="#ff6b6b" stroke-width="2"/><rect x="1681" y="25" width="45" height="36" fill="none" stroke="#ff6b6b" stroke-width="2"/></svg>
<div class="t " style="left:1561.40px;top:101.00px;font-size:15.4px;color:#181818;transform:scaleX(0.9373);transform-origin:0 0;font-weight:700;">Setup</div>
<div class="t " style="left:1516.00px;top:137.00px;font-size:12.5px;color:#2e2e2e;transform:scaleX(1.0065);transform-origin:0 0;">Setup for current app</div>
<div class="t " style="left:1561.40px;top:206.00px;font-size:15.4px;color:#181818;transform:scaleX(0.9747);transform-origin:0 0;">Marketing Setup</div>
<div class="t " style="left:1561.40px;top:256.00px;font-size:15.4px;color:#181818;transform:scaleX(0.9691);transform-origin:0 0;">Your Account</div>
<div class="t " style="left:1516.40px;top:304.00px;font-size:15.4px;color:#181818;transform:scaleX(0.9521);transform-origin:0 0;">Developer Console</div>
<div class="t " style="left:1516.40px;top:370.00px;font-size:15.4px;color:#181818;transform:scaleX(0.9075);transform-origin:0 0;">Edit Page</div>
<div class="abs" style="left:1555.400px;top:346.400px;width:144.600px;height:31.100px;background:#fff;border:1.400px solid #2a2a2a"></div>
<div class="t " style="left:1565.70px;top:354.00px;font-size:15px;color:#1d1d3a;transform:scaleX(0.9735);transform-origin:0 0;">Developer Console</div>
</div>
<div id="leftstrip" class="abs"></div>
<div id="scroll" class="abs"></div>
<div id="thumb" class="abs"></div>
<div id="rightcol" class="abs"></div>
</body>
</html>
